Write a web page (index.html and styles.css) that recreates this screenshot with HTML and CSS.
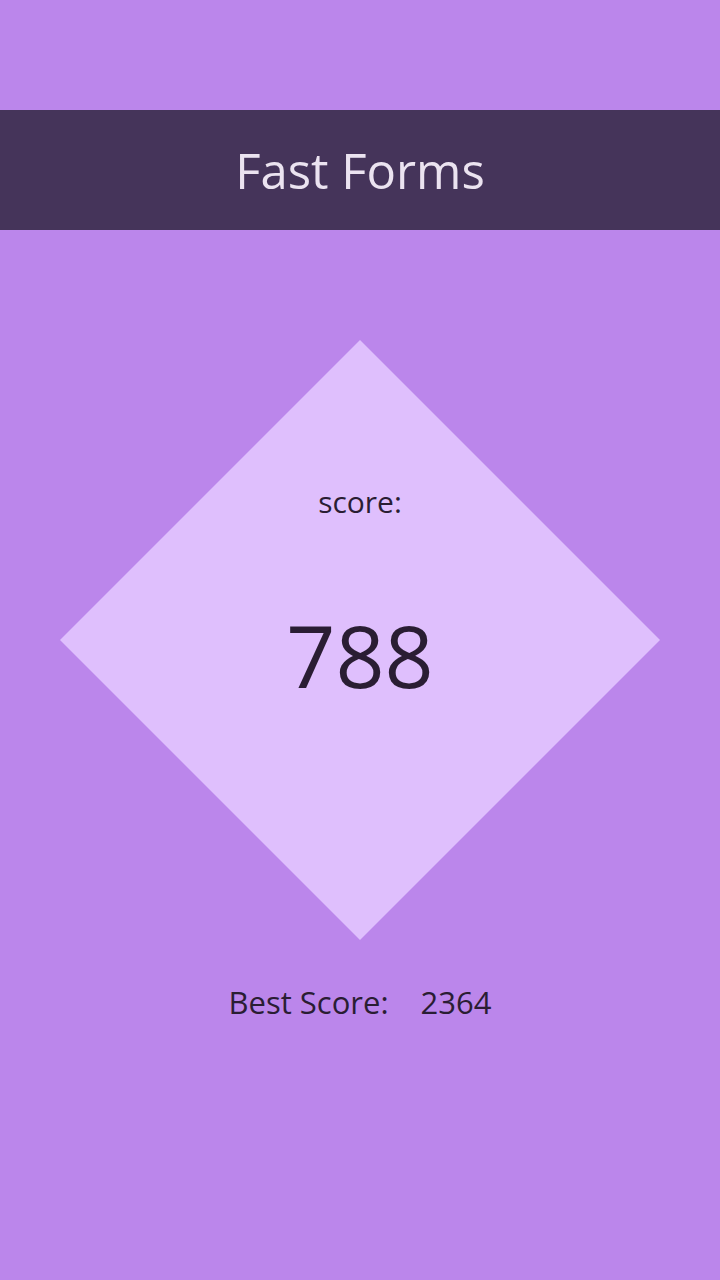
FILE: index.html
```html
<!DOCTYPE html>
<html>
<head>
<meta charset="utf-8">
<link rel="stylesheet" href="styles.css">
</head>
<body>
<div class="app">
  <header class="topbar"><h1 class="title">Fast Forms</h1></header>
  <main class="content">
    <div class="diamond">
      <div class="score-label">score:</div>
      <div class="score-value">788</div>
    </div>
    <div class="best">
      <span class="best-label">Best Score:</span>
      <span class="best-value">2364</span>
    </div>
  </main>
</div>
</body>
</html>
```

FILE: styles.css
```css
html, body {
  margin: 0;
  padding: 0;
}
body {
  background: #bb86eb;
  font-family: "Open Sans", "Noto Sans", sans-serif;
  color: #2a1d33;
  width: 720px;
  height: 1280px;
  overflow: hidden;
}
.app {
  display: flex;
  flex-direction: column;
  padding-top: 110px;
}
.topbar {
  height: 120px;
  background: #45345a;
  display: flex;
  align-items: center;
  justify-content: center;
}
.title {
  margin: 0;
  font-weight: 400;
  font-size: 49px;
  color: #ebe3f0;
  letter-spacing: 0;
  line-height: 1;
}
.content {
  display: flex;
  flex-direction: column;
  align-items: center;
  padding-top: 110px;
}
.diamond {
  width: 600px;
  height: 600px;
  background: #dfbffd;
  clip-path: polygon(50% 0, 100% 50%, 50% 100%, 0 50%);
  display: flex;
  flex-direction: column;
  align-items: center;
}
.score-label {
  margin-top: 142px;
  font-size: 30px;
  line-height: 40px;
}
.score-value {
  margin-top: 83px;
  font-size: 86px;
  line-height: 100px;
}
.best {
  margin-top: 42px;
  display: flex;
  gap: 32px;
  font-size: 31px;
  line-height: 40px;
}
```
